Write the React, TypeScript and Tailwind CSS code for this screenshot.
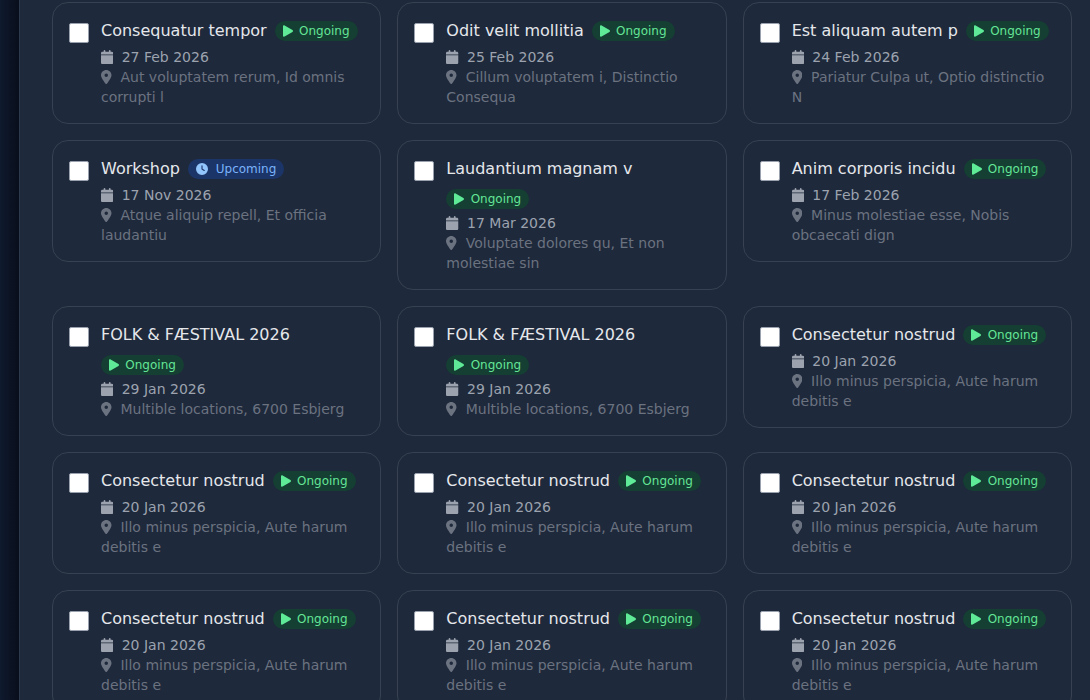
import { FaPlay } from "react-icons/fa";
import { FaCalendar, FaClock, FaLocationDot } from "react-icons/fa6";

type Ev = {
  title: string;
  date: string;
  place: string;
  upcoming?: boolean;
};

const illo: Ev = {
  title: "Consectetur nostrud",
  date: "20 Jan 2026",
  place: "Illo minus perspicia, Aute harum debitis e",
};

const folk: Ev = {
  title: "FOLK & FÆSTIVAL 2026",
  date: "29 Jan 2026",
  place: "Multible locations, 6700 Esbjerg",
};

const events: Ev[] = [
  { title: "Consequatur tempor", date: "27 Feb 2026", place: "Aut voluptatem rerum, Id omnis corrupti l" },
  { title: "Odit velit mollitia", date: "25 Feb 2026", place: "Cillum voluptatem i, Distinctio Consequa" },
  { title: "Est aliquam autem p", date: "24 Feb 2026", place: "Pariatur Culpa ut, Optio distinctio N" },
  { title: "Workshop", date: "17 Nov 2026", place: "Atque aliquip repell, Et officia laudantiu", upcoming: true },
  { title: "Laudantium magnam v", date: "17 Mar 2026", place: "Voluptate dolores qu, Et non molestiae sin" },
  { title: "Anim corporis incidu", date: "17 Feb 2026", place: "Minus molestiae esse, Nobis obcaecati dign" },
  folk,
  folk,
  illo,
  illo,
  illo,
  illo,
  illo,
  illo,
  illo,
];

function Badge({ upcoming }: { upcoming?: boolean }) {
  if (upcoming) {
    return (
      <span className="h-5 rounded-full bg-[#1c3568] px-2 text-xs leading-5 text-[#7ab3fb]">
        <FaClock className="mr-1 inline-block h-3 w-3 align-[-2px] text-[#93c5fd]" /> Upcoming
      </span>
    );
  }
  return (
    <span className="h-5 rounded-full bg-[#143f32] px-2 text-xs leading-5 text-[#65e597]">
      <FaPlay className="mr-[2.5px] inline-block h-3 w-[10px] align-[-2px] text-[#5eea96]" /> Ongoing
    </span>
  );
}

function Card({ ev }: { ev: Ev }) {
  return (
    <div className="flex gap-3 rounded-2xl border border-[#374151] bg-[#1e293b] p-4">
      <div className="mt-1 h-5 w-5 shrink-0 rounded-[2px] border border-gray-400 bg-white" />
      <div className="min-w-0 flex-1">
        <div className="mb-1 flex flex-wrap items-center gap-x-2 gap-y-2">
          <span className="text-base leading-6 text-[#e5e7eb]">{ev.title}</span>
          <Badge upcoming={ev.upcoming} />
        </div>
        <div className="text-sm leading-5 text-[#9ca3af]">
          <FaCalendar className="mr-1 inline-block h-3.5 w-[12.25px] align-[-2px]" /> {ev.date}
        </div>
        <div className="text-sm leading-5 text-[#6b7280]">
          <FaLocationDot className="mr-[4.5px] inline-block h-3.5 w-[10.5px] align-[-2px]" /> {ev.place}
        </div>
      </div>
    </div>
  );
}

export default function App() {
  return (
    <div className="flex h-screen overflow-hidden bg-[#1e293b] font-['DejaVu_Sans',sans-serif]">
      <aside className="w-[20px] shrink-0 border-r border-[#2d3a4d] bg-gradient-to-r from-[#0f1a2e] to-[#090e1b]" />
      <main className="flex-1 pl-8 pr-[18px] pt-[2px]">
        <div className="grid grid-cols-3 items-start gap-4">
          {events.map((ev, i) => (
            <Card key={i} ev={ev} />
          ))}
        </div>
      </main>
    </div>
  );
}
